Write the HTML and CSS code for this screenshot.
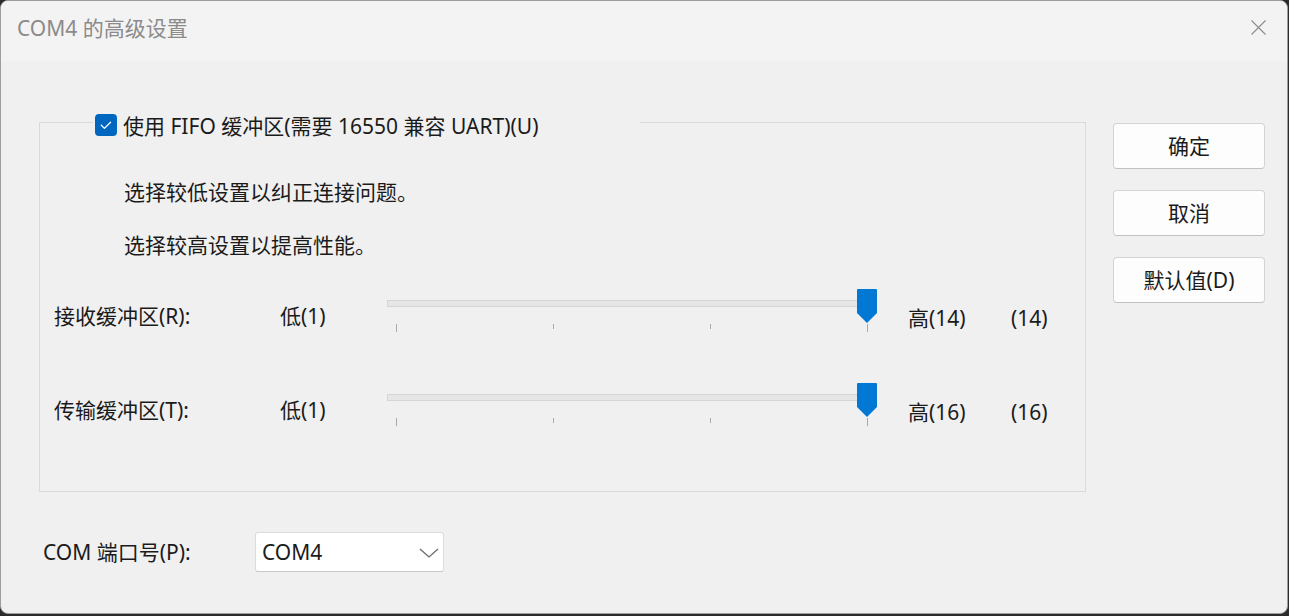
FILE: index.html
```html
<!DOCTYPE html>
<html lang="zh-CN">
<head>
<meta charset="utf-8">
<title>COM4 的高级设置</title>
<link rel="stylesheet" href="styles.css">
</head>
<body>
<div class="window">
  <div class="titlebar">
    <div class="title">COM4 的高级设置</div>
    <svg class="close" width="15" height="15" viewBox="0 0 15 15"><path d="M0.5 0.5 L14.5 14.5 M14.5 0.5 L0.5 14.5" stroke="#8a8a8a" stroke-width="1.1" fill="none"/></svg>
  </div>
  <div class="content">
    <div class="left">
      <fieldset class="group">
        <legend class="legend">
          <span class="checkbox"><svg width="22" height="22" viewBox="0 0 22 22"><path d="M6.3 11.3 L9.4 14.4 L15.6 8.2" stroke="#fff" stroke-width="1.3" fill="none" stroke-linecap="round" stroke-linejoin="round"/></svg></span>
          <span class="legend-text">使用 FIFO 缓冲区(需要 16550 兼容 UART)(U)</span>
        </legend>
        <p class="hint first">选择较低设置以纠正连接问题。</p>
        <p class="hint second">选择较高设置以提高性能。</p>
        <div class="row row1">
          <span class="txt">接收缓冲区(R):</span>
          <span class="txt">低(1)</span>
          <div class="slider">
            <div class="track"></div>
            <div class="ticks"><i class="tick long"></i><i class="tick"></i><i class="tick"></i><i class="tick long"></i></div>
            <svg class="thumb" width="20" height="34" viewBox="0 0 20 34"><path d="M1 0 H19 Q20 0 20 1 V24 L10 34 L0 24 V1 Q0 0 1 0 Z" fill="#0078d4"/></svg>
          </div>
          <span class="txt low">高(14)</span>
          <span class="txt low">(14)</span>
        </div>
        <div class="row row2">
          <span class="txt">传输缓冲区(T):</span>
          <span class="txt">低(1)</span>
          <div class="slider">
            <div class="track"></div>
            <div class="ticks"><i class="tick long"></i><i class="tick"></i><i class="tick"></i><i class="tick long"></i></div>
            <svg class="thumb" width="20" height="34" viewBox="0 0 20 34"><path d="M1 0 H19 Q20 0 20 1 V24 L10 34 L0 24 V1 Q0 0 1 0 Z" fill="#0078d4"/></svg>
          </div>
          <span class="txt low">高(16)</span>
          <span class="txt low">(16)</span>
        </div>
      </fieldset>
      <div class="com-row">
        <span class="com-label">COM 端口号(P):</span>
        <div class="combo">
          <span>COM4</span>
          <svg width="20" height="10" viewBox="0 0 20 10"><path d="M1 1 L10 9 L19 1" stroke="#6a6a6a" stroke-width="1.3" fill="none"/></svg>
        </div>
      </div>
    </div>
    <div class="right">
      <button class="btn">确定</button>
      <button class="btn">取消</button>
      <button class="btn">默认值(D)</button>
    </div>
  </div>
</div>
</body>
</html>
```
FILE: styles.css
```css
* { box-sizing: border-box; }
html, body { margin: 0; padding: 0; }
body {
  background: #2b2b2b;
  width: 1289px;
  height: 616px;
  overflow: hidden;
  font-family: "Noto Sans", "Noto Sans CJK SC", sans-serif;
  font-size: 21px;
  color: #1b1b1b;
}
.window {
  width: 1288px;
  height: 614px;
  background: #f0f0f0;
  border: 1px solid #9e9e9e;
  border-radius: 8px;
  overflow: hidden;
}
.titlebar {
  height: 60px;
  background: #f3f3f3;
  display: flex;
  align-items: flex-start;
  padding: 13px 21px 0 16px;
}
.title {
  line-height: 28px;
  color: #8b8b8b;
  font-size: 21px;
}
.close { margin-left: auto; margin-top: 6px; }
.content { display: flex; }
.left { padding-left: 38px; }
.group {
  margin: 51px 0 0 0;
  padding: 0 0 64px 0;
  width: 1047px;
  border: 1px solid #dadada;
  min-width: 0;
}
.legend {
  margin-left: 53px;
  padding: 0 2px;
  width: 547px;
  height: 20px;
  display: flex;
  align-items: flex-start;
  line-height: 28px;
}
.checkbox {
  width: 22px;
  height: 22px;
  margin-top: 2px;
  border-radius: 4px;
  background: #0067c0;
  display: block;
  flex: none;
}
.checkbox svg { display: block; }
.legend-text { margin-left: 6px; white-space: nowrap; }
.hint {
  margin: 0;
  padding-left: 84px;
  line-height: 28px;
}
.hint.first { margin-top: 46px; }
.hint.second { margin-top: 25px; }
.row {
  display: grid;
  grid-template-columns: 226px 107px 521px 103px auto;
  padding-left: 14px;
  height: 44px;
}
.row1 { margin-top: 30px; }
.row2 { margin-top: 50px; }
.txt {
  margin-top: 13px;
  line-height: 28px;
  white-space: nowrap;
}
.txt.low { margin-top: 15px; }
.slider {
  position: relative;
  width: 490px;
  height: 44px;
}
.track {
  margin-top: 11px;
  width: 476px;
  height: 7px;
  border: 1px solid #d5d5d5;
  background: #e6e6e6;
}
.ticks {
  margin-top: 17px;
  padding-left: 9px;
  width: 481px;
  display: flex;
  justify-content: space-between;
  align-items: flex-start;
}
.tick {
  display: block;
  width: 1px;
  height: 5px;
  background: #a9a9a9;
}
.tick.long { height: 8px; }
.thumb {
  position: absolute;
  left: 470px;
  top: 0;
}
.com-row {
  margin-top: 40px;
  display: flex;
  align-items: center;
  padding-left: 4px;
}
.com-label {
  width: 212px;
  line-height: 28px;
}
.combo {
  width: 189px;
  height: 40px;
  background: #ffffff;
  border: 1px solid #dcdcdc;
  border-bottom-color: #c8c8c8;
  border-radius: 3px;
  display: flex;
  align-items: center;
  justify-content: space-between;
  padding: 0 4px 0 6px;
  line-height: 28px;
}
.combo svg { display: block; margin-top: 1px; }
.right {
  margin-left: 27px;
  margin-top: 62px;
  display: flex;
  flex-direction: column;
  gap: 21px;
}
.btn {
  width: 152px;
  height: 46px;
  background: #fdfdfd;
  border: 1px solid #d4d4d4;
  border-bottom-color: #c2c2c2;
  border-radius: 4px;
  font-family: "Noto Sans", "Noto Sans CJK SC", sans-serif;
  font-size: 21px;
  color: #1b1b1b;
  line-height: 28px;
  padding: 0;
}
```
